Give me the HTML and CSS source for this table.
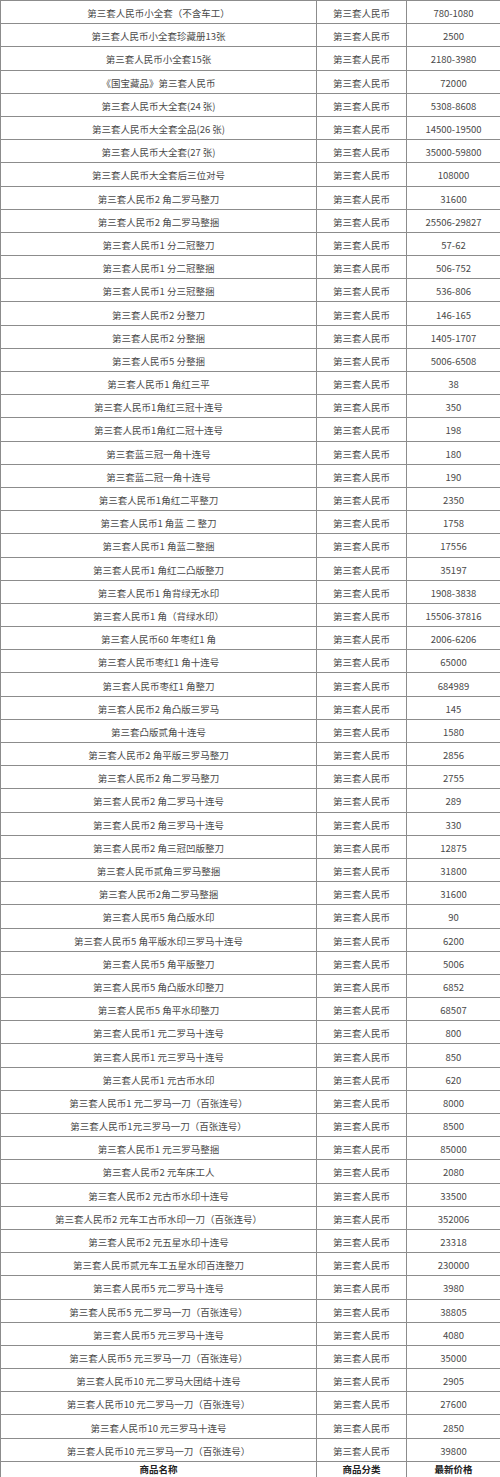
FILE: index.html
```html
<!DOCTYPE html>
<html lang="zh-CN">
<head>
<meta charset="utf-8">
<title>第三套人民币价格表</title>
<link rel="stylesheet" href="styles.css">
</head>
<body>
<table class="price-table">
<colgroup><col class="c-name"><col class="c-cat"><col class="c-price"></colgroup>
<tbody>
<tr><td>第三套人民币小全套（不含车工）</td><td>第三套人民币</td><td>780-1080</td></tr>
<tr><td>第三套人民币小全套珍藏册13张</td><td>第三套人民币</td><td>2500</td></tr>
<tr><td>第三套人民币小全套15张</td><td>第三套人民币</td><td>2180-3980</td></tr>
<tr><td>《国宝藏品》第三套人民币</td><td>第三套人民币</td><td>72000</td></tr>
<tr><td>第三套人民币大全套(24 张)</td><td>第三套人民币</td><td>5308-8608</td></tr>
<tr><td>第三套人民币大全套全品(26 张)</td><td>第三套人民币</td><td>14500-19500</td></tr>
<tr><td>第三套人民币大全套(27 张)</td><td>第三套人民币</td><td>35000-59800</td></tr>
<tr><td>第三套人民币大全套后三位对号</td><td>第三套人民币</td><td>108000</td></tr>
<tr><td>第三套人民币2 角二罗马整刀</td><td>第三套人民币</td><td>31600</td></tr>
<tr><td>第三套人民币2 角二罗马整捆</td><td>第三套人民币</td><td>25506-29827</td></tr>
<tr><td>第三套人民币1 分二冠整刀</td><td>第三套人民币</td><td>57-62</td></tr>
<tr><td>第三套人民币1 分二冠整捆</td><td>第三套人民币</td><td>506-752</td></tr>
<tr><td>第三套人民币1 分三冠整捆</td><td>第三套人民币</td><td>536-806</td></tr>
<tr><td>第三套人民币2 分整刀</td><td>第三套人民币</td><td>146-165</td></tr>
<tr><td>第三套人民币2 分整捆</td><td>第三套人民币</td><td>1405-1707</td></tr>
<tr><td>第三套人民币5 分整捆</td><td>第三套人民币</td><td>5006-6508</td></tr>
<tr><td>第三套人民币1 角红三平</td><td>第三套人民币</td><td>38</td></tr>
<tr><td>第三套人民币1角红三冠十连号</td><td>第三套人民币</td><td>350</td></tr>
<tr><td>第三套人民币1角红二冠十连号</td><td>第三套人民币</td><td>198</td></tr>
<tr><td>第三套蓝三冠一角十连号</td><td>第三套人民币</td><td>180</td></tr>
<tr><td>第三套蓝二冠一角十连号</td><td>第三套人民币</td><td>190</td></tr>
<tr><td>第三套人民币1角红二平整刀</td><td>第三套人民币</td><td>2350</td></tr>
<tr><td>第三套人民币1 角蓝 二 整刀</td><td>第三套人民币</td><td>1758</td></tr>
<tr><td>第三套人民币1 角蓝二整捆</td><td>第三套人民币</td><td>17556</td></tr>
<tr><td>第三套人民币1 角红二凸版整刀</td><td>第三套人民币</td><td>35197</td></tr>
<tr><td>第三套人民币1 角背绿无水印</td><td>第三套人民币</td><td>1908-3838</td></tr>
<tr><td>第三套人民币1 角（背绿水印）</td><td>第三套人民币</td><td>15506-37816</td></tr>
<tr><td>第三套人民币60 年枣红1 角</td><td>第三套人民币</td><td>2006-6206</td></tr>
<tr><td>第三套人民币枣红1 角十连号</td><td>第三套人民币</td><td>65000</td></tr>
<tr><td>第三套人民币枣红1 角整刀</td><td>第三套人民币</td><td>684989</td></tr>
<tr><td>第三套人民币2 角凸版三罗马</td><td>第三套人民币</td><td>145</td></tr>
<tr><td>第三套凸版贰角十连号</td><td>第三套人民币</td><td>1580</td></tr>
<tr><td>第三套人民币2 角平版三罗马整刀</td><td>第三套人民币</td><td>2856</td></tr>
<tr><td>第三套人民币2 角二罗马整刀</td><td>第三套人民币</td><td>2755</td></tr>
<tr><td>第三套人民币2 角二罗马十连号</td><td>第三套人民币</td><td>289</td></tr>
<tr><td>第三套人民币2 角三罗马十连号</td><td>第三套人民币</td><td>330</td></tr>
<tr><td>第三套人民币2 角三冠凹版整刀</td><td>第三套人民币</td><td>12875</td></tr>
<tr><td>第三套人民币贰角三罗马整捆</td><td>第三套人民币</td><td>31800</td></tr>
<tr><td>第三套人民币2角二罗马整捆</td><td>第三套人民币</td><td>31600</td></tr>
<tr><td>第三套人民币5 角凸版水印</td><td>第三套人民币</td><td>90</td></tr>
<tr><td>第三套人民币5 角平版水印三罗马十连号</td><td>第三套人民币</td><td>6200</td></tr>
<tr><td>第三套人民币5 角平版整刀</td><td>第三套人民币</td><td>5006</td></tr>
<tr><td>第三套人民币5 角凸版水印整刀</td><td>第三套人民币</td><td>6852</td></tr>
<tr><td>第三套人民币5 角平水印整刀</td><td>第三套人民币</td><td>68507</td></tr>
<tr><td>第三套人民币1 元二罗马十连号</td><td>第三套人民币</td><td>800</td></tr>
<tr><td>第三套人民币1 元三罗马十连号</td><td>第三套人民币</td><td>850</td></tr>
<tr><td>第三套人民币1 元古币水印</td><td>第三套人民币</td><td>620</td></tr>
<tr><td>第三套人民币1 元二罗马一刀（百张连号）</td><td>第三套人民币</td><td>8000</td></tr>
<tr><td>第三套人民币1元三罗马一刀（百张连号）</td><td>第三套人民币</td><td>8500</td></tr>
<tr><td>第三套人民币1 元三罗马整捆</td><td>第三套人民币</td><td>85000</td></tr>
<tr><td>第三套人民币2 元车床工人</td><td>第三套人民币</td><td>2080</td></tr>
<tr><td>第三套人民币2 元古币水印十连号</td><td>第三套人民币</td><td>33500</td></tr>
<tr><td>第三套人民币2 元车工古币水印一刀（百张连号）</td><td>第三套人民币</td><td>352006</td></tr>
<tr><td>第三套人民币2 元五星水印十连号</td><td>第三套人民币</td><td>23318</td></tr>
<tr><td>第三套人民币贰元车工五星水印百连整刀</td><td>第三套人民币</td><td>230000</td></tr>
<tr><td>第三套人民币5 元二罗马十连号</td><td>第三套人民币</td><td>3980</td></tr>
<tr><td>第三套人民币5 元二罗马一刀（百张连号）</td><td>第三套人民币</td><td>38805</td></tr>
<tr><td>第三套人民币5 元三罗马十连号</td><td>第三套人民币</td><td>4080</td></tr>
<tr><td>第三套人民币5 元三罗马一刀（百张连号）</td><td>第三套人民币</td><td>35000</td></tr>
<tr><td>第三套人民币10 元二罗马大团结十连号</td><td>第三套人民币</td><td>2905</td></tr>
<tr><td>第三套人民币10 元二罗马一刀（百张连号）</td><td>第三套人民币</td><td>27600</td></tr>
<tr><td>第三套人民币10 元三罗马十连号</td><td>第三套人民币</td><td>2850</td></tr>
<tr><td>第三套人民币10 元三罗马一刀（百张连号）</td><td>第三套人民币</td><td>39800</td></tr>
<tr class="head-row"><th>商品名称</th><th>商品分类</th><th>最新价格</th></tr>
</tbody>
</table>
</body>
</html>
```
FILE: styles.css
```css
html, body {
  margin: 0;
  padding: 0;
  background: #ffffff;
}
body {
  font-family: "Noto Sans CJK SC", "Noto Sans", sans-serif;
  font-size: 9.5px;
  color: #4a4a4a;
}
.price-table {
  width: 500px;
  table-layout: fixed;
  border-collapse: collapse;
}
.c-name { width: 316px; }
.c-cat { width: 90px; }
.c-price { width: 94px; }
.price-table tr {
  height: 23.2px;
}
.price-table td,
.price-table th {
  border: 1px solid #8c8c8c;
  padding: 2px 0 0 0;
  text-align: center;
  vertical-align: middle;
  white-space: nowrap;
  line-height: 12px;
  font-weight: normal;
}
.price-table .head-row th {
  font-weight: bold;
  color: #222222;
  padding: 2px 0 0 0;
  line-height: 11px;
  vertical-align: top;
}
```
